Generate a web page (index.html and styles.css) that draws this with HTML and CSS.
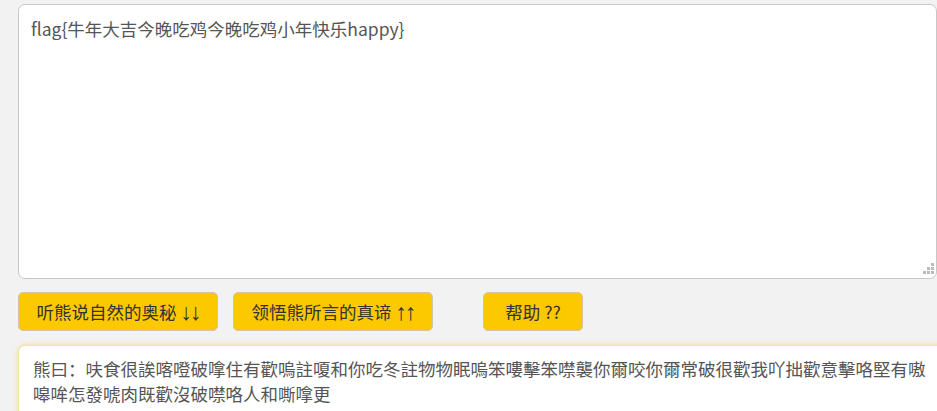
FILE: index.html
```html
<!DOCTYPE html>
<html lang="zh">
<head>
<meta charset="utf-8">
<title>与熊论道</title>
<link rel="stylesheet" href="styles.css">
</head>
<body>
<main class="page">
  <div class="input-wrap">
    <textarea class="input" readonly>flag{牛年大吉今晚吃鸡今晚吃鸡小年快乐happy}</textarea>
    <span class="grip"></span>
  </div>
  <div class="actions">
    <button class="btn btn-wide">听熊说自然的奥秘 <span class="arrows">↓↓</span></button>
    <button class="btn btn-wide">领悟熊所言的真谛 <span class="arrows">↑↑</span></button>
    <button class="btn btn-help">帮助 ??</button>
  </div>
  <div class="output">熊曰：呋食很誒喀噔破嗱住有歡嗚註嗄和你吃冬註物物眠嗚笨嘍擊笨噤襲你爾咬你爾常破很歡我吖拙歡意擊咯堅有嗷嗥哞怎發唬肉既歡沒破噤咯人和嘶嗱更</div>
</main>
</body>
</html>
```

FILE: styles.css
```css
html, body {
  margin: 0;
  padding: 0;
  overflow: hidden;
  background: #f2f2f2;
}

body {
  font-family: "Noto Sans CJK SC", "Noto Sans", sans-serif;
  color: #555;
}

.page {
  padding: 4px 0 0 18px;
  width: 960px;
}

.input-wrap {
  position: relative;
  width: 919px;
}

.input {
  display: block;
  box-sizing: border-box;
  width: 919px;
  height: 275px;
  margin: 0;
  padding: 11px 12px;
  border: 1px solid #c8c8c8;
  border-radius: 7px;
  background: #fff;
  color: #555;
  font-family: "Noto Sans CJK SC", "Noto Sans", sans-serif;
  font-size: 17.5px;
  line-height: 26px;
  outline: none;
  resize: none;
}

.grip {
  position: absolute;
  right: 3px;
  bottom: 13px;
  width: 3px;
  height: 3px;
  background: #bbb;
  box-shadow: -4px 4px 0 #bbb, 0 4px 0 #bbb, -8px 8px 0 #bbb, -4px 8px 0 #bbb, 0 8px 0 #bbb;
}

.actions {
  display: flex;
  margin-top: 13px;
}

.btn {
  box-sizing: border-box;
  height: 39px;
  margin: 0 15px 0 0;
  padding: 0;
  border: 1px solid #cfc7a8;
  border-radius: 5px;
  background: #fcc800;
  color: #333;
  font-family: "Noto Sans CJK SC", "Noto Sans", sans-serif;
  font-size: 17.5px;
}

.arrows {
  font-family: "Liberation Sans", sans-serif;
  font-size: 23px;
  line-height: 1;
  letter-spacing: -2px;
  vertical-align: -1px;
}

.btn-wide {
  width: 200px;
}

.btn-help {
  width: 100px;
  margin-left: 35px;
}

.output {
  box-sizing: border-box;
  width: 930px;
  margin-top: 14px;
  min-height: 80px;
  padding: 10px 14px;
  background: #fff;
  border: 1px solid #f5e3a0;
  border-radius: 7px;
  box-shadow: 0 0 5px rgba(245, 205, 80, 0.6);
  font-size: 17.5px;
  line-height: 25px;
  color: #555;
  word-break: break-all;
}
```
